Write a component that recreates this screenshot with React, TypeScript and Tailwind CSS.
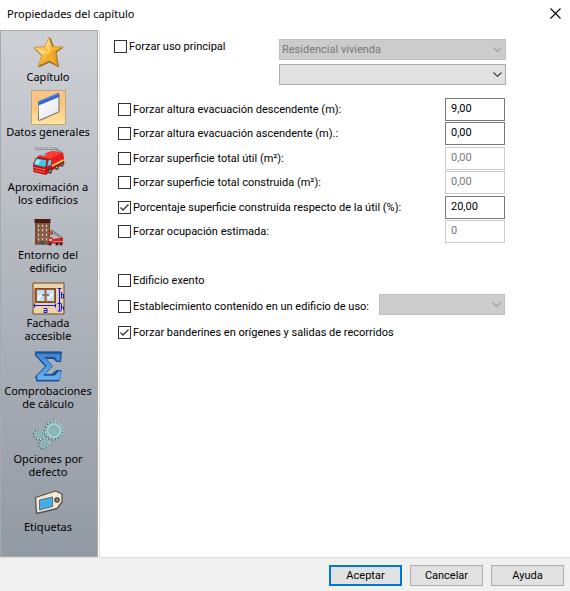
import React, { useState } from 'react';

const StarIcon = () => (
  <svg viewBox="0 0 35 35" className="h-full w-full">
    <defs>
      <linearGradient id="star" x1="0" y1="0" x2="1" y2="1">
        <stop offset="0" stopColor="#ffd468" />
        <stop offset="0.5" stopColor="#f9b93a" />
        <stop offset="1" stopColor="#e8951a" />
      </linearGradient>
    </defs>
    <path d="M19.500 2.500l3.500 9.500 9.500.5-7 5 2.500 15-9.500-5-11 5 3.500-11.500-8-7.500 11-1.500z" fill="#8a6426" />
    <path d="M18 2l3.500 9.500 10.500.5-7.500 4.500 2.500 14.500-8.500-5-11.500 5 4-10.500-8-8 11-1z" fill="url(#star)" stroke="#b57d24" strokeWidth="0.6" />
    <path d="M18 3.500l1 14-4.500-6zM4.500 13l14.500 4.500-8 2z" fill="#ffe08a" opacity="0.8" />
    <path d="M19 18l12-5.500-7 4.500 2 13z" fill="#e99b20" opacity="0.6" />
    <path d="M19 18l-11 12 10-4.500z" fill="#f0a52a" opacity="0.6" />
  </svg>
);

const WindowIcon = () => (
  <svg viewBox="0 0 35 35" className="h-full w-full">
    <defs>
      <linearGradient id="pane" x1="0" y1="0" x2="1" y2="1">
        <stop offset="0" stopColor="#ffffff" />
        <stop offset="1" stopColor="#e4e5ee" />
      </linearGradient>
    </defs>
    <path d="M7 11.500l20.500-8.500 1 1v18l-20 9-1.500-1z" fill="#6f6a68" />
    <path d="M7.500 13l20-8v16.500l-19.500 8.500z" fill="url(#pane)" />
    <path d="M7 11.500l20.500-8.500.5 4-20.500 8.500z" fill="#2f63d6" />
    <path d="M7.500 12l20-8" stroke="#6f9af0" strokeWidth="0.800" />
  </svg>
);

const TruckIcon = () => (
  <svg viewBox="0 0 35 35" className="h-full w-full">
    <path d="M3 2.500h22l8 6-2 1-7-4.500h-19z" fill="#8b8f94" />
    <path d="M5 3.500h19" stroke="#e8e8e8" strokeDasharray="1.500 1.500" />
    <path d="M2 19l5-8 14-5 11 2 1.500 11-15.500 8-3 3-12.500-3z" fill="#c90f0f" />
    <path d="M6.500 11.500l15-5.500 10 2-12 6z" fill="#ff3b30" />
    <path d="M19 14l13-5.500 1 7-14 7z" fill="#ed1c1c" />
    <path d="M5 13l11 2-1.500 7.500-12-2.500z" fill="#42c8ec" stroke="#8c1515" strokeWidth="0.7" />
    <path d="M6 14.500l4 .500-3 4.500-3.500-1z" fill="#9cecf8" />
    <path d="M17 15.500l3.500-1.500v5.500l-4.500 2.500z" fill="#5bd3ec" stroke="#8c1515" strokeWidth="0.5" />
    <path d="M9 10l4-1.500 3 1-4 1.500z" fill="#5fe0f0" />
    <path d="M21 21l11.500-6" stroke="#ffe04a" strokeWidth="1.600" />
    <path d="M3 22.500l11.500 2.500M3.500 25l10.500 2.500" stroke="#ff7d68" strokeWidth="0.9" />
    <ellipse cx="19" cy="26" rx="2" ry="2.800" fill="#3a3a3a" />
    <ellipse cx="26" cy="22.500" rx="1.800" ry="2.500" fill="#3a3a3a" />
    <ellipse cx="31" cy="19.500" rx="1.500" ry="2.300" fill="#3a3a3a" />
    <circle cx="19" cy="26" r="0.9" fill="#bbb" />
    <circle cx="26" cy="22.500" r="0.9" fill="#bbb" />
    <circle cx="31" cy="19.500" r="0.7" fill="#bbb" />
  </svg>
);

const BuildingIcon = () => (
  <svg viewBox="0 0 35 35" className="h-full w-full">
    <path d="M4 9h15v23h-15z" fill="#8e5434" />
    <path d="M3.500 6h16v4h-16z" fill="#4a1c14" />
    <path d="M5 10v22M18.500 10v22" stroke="#5e301b" strokeWidth="0.8" />
    <path d="M4 15.500h15M4 20h15M4 24.500h15" stroke="#b07a52" strokeWidth="0.6" />
    {[11.500, 16, 20.500, 25].map((y) => (
      <path
        key={y}
        d={`M6.500 ${y}h2v2.800h-2zM10.500 ${y}h2v2.800h-2zM14.500 ${y}h2v2.800h-2z`}
        fill="#c3d6de"
        stroke="#5b3320"
        strokeWidth="0.4"
      />
    ))}
    <path d="M9.500 28.500h4v3.500h-4z" fill="#3b5056" />
    <path d="M4 31.500h12" stroke="#6c6c6c" />
    <path d="M20 17.500l11 7.500" stroke="#777b80" strokeWidth="2.200" />
    <path d="M20.500 18l10 7" stroke="#ddd" strokeWidth="0.7" strokeDasharray="1 1" />
    <path d="M19.500 17v5l3-1z" fill="#d42420" />
    <path d="M17 25l4-1 1 2 10-1.500v6h-15z" fill="#cf2222" />
    <path d="M18 26h3v2h-3z" fill="#9ccbd8" />
    <path d="M22 28.500h10" stroke="#f4a08c" strokeWidth="0.8" />
    <circle cx="19" cy="31" r="1.600" fill="#292929" />
    <circle cx="26" cy="31" r="1.600" fill="#292929" />
    <circle cx="30" cy="31" r="1.600" fill="#292929" />
  </svg>
);

const FacadeIcon = () => (
  <svg viewBox="0 0 35 35" className="h-full w-full">
    <path d="M2 2h31v31h-31z" fill="#e8d5aa" stroke="#804622" />
    <path d="M4 7.500h20.500v14h-20.500z" fill="#a95a2b" stroke="#6e3517" strokeWidth="0.8" />
    <path d="M6 9h7.500v11h-7.500zM15.500 9h7.500v11h-7.500z" fill="#bfe3f5" />
    <path d="M6.500 18.500l5-6M17 18l5-6" stroke="#fff" strokeWidth="1.500" />
    <path d="M11 14h2.500M15.500 14h2.500" stroke="#222" strokeWidth="1.200" />
    <g stroke="#1414e0" fill="none">
      <path d="M3.500 24.500h21M3.500 22.500v4M24.500 22.500v4" strokeWidth="1.200" />
      <path d="M28.500 7v23M26.500 7.500h4M26.500 22.500h4M26.500 30h4" strokeWidth="1.200" />
      <path d="M30.500 11v6h2v-3.500h-2M30.500 23v6M30.500 26h2v3" />
      <path d="M12.500 27.500h3.500v4h-3v-2h3" />
    </g>
  </svg>
);

const SigmaIcon = () => (
  <svg viewBox="0 0 35 35" className="h-full w-full">
    <defs>
      <linearGradient id="sigma" x1="0" y1="0" x2="0" y2="1">
        <stop offset="0" stopColor="#3f83d6" />
        <stop offset="1" stopColor="#6db0f2" />
      </linearGradient>
    </defs>
    <path d="M4 2.500h25l2 .500-1 10h-4.500l-3-3h-7l6 7-7 8h6l5-4h5l-2.500 11.500h-22.500l-1.500-5 10-10-10-11z" fill="#174f91" />
    <path d="M5 4.500h24.500l-.5 7.500h-2.500l-3-4h-10l8 9-9 9.500h11l4.500-4.500h2.500l-2 9h-22.500v-4.500l9.500-9.500-10-10.500z" fill="url(#sigma)" stroke="#2768b3" strokeWidth="0.6" />
    <path d="M5 3.500h25" stroke="#1d5497" strokeWidth="1.500" />
  </svg>
);

const Gear = ({ cx, cy, r, teeth }: { cx: number; cy: number; r: number; teeth: number }) => (
  <g>
    <circle cx={cx - 0.8} cy={cy + 0.5} r={r} fill="none" stroke="#4b5c62" strokeWidth="2.200" strokeDasharray={`${(Math.PI * r) / teeth}`} />
    <circle cx={cx} cy={cy} r={r} fill="none" stroke="#a4d6d7" strokeWidth="2" strokeDasharray={`${(Math.PI * r) / teeth}`} />
    <circle cx={cx} cy={cy} r={r - 0.8} fill="#a4dadb" stroke="#6f979b" strokeWidth="0.5" />
    <circle cx={cx} cy={cy} r={r * 0.6} fill="#8fb4b6" stroke="#7ba6a9" strokeWidth="0.8" />
  </g>
);

const GearsIcon = () => (
  <svg viewBox="0 0 35 35" className="h-full w-full">
    <Gear cx={13.500} cy={26.500} r={4.500} teeth={10} />
    <Gear cx={9} cy={17} r={5} teeth={10} />
    <Gear cx={23} cy={13.500} r={8.500} teeth={16} />
  </svg>
);

const TagIcon = () => (
  <svg viewBox="0 0 35 35" className="h-full w-full">
    <path d="M4.500 12.500l20-6.500 6.500 3v8l-5 6.500-20.500 5z" fill="#f3e6d2" stroke="#565350" strokeWidth="1.300" strokeLinejoin="round" />
    <path d="M8.500 15l13-3v9.500l-13 3.500z" fill="#45aee9" stroke="#3a5b70" strokeWidth="0.8" />
    <circle cx="26" cy="15" r="2.200" fill="#8f8b88" stroke="#45413f" strokeWidth="1.200" />
  </svg>
);

const sections = [
  { label: 'Capítulo', icon: <StarIcon /> },
  { label: 'Datos generales', icon: <WindowIcon /> },
  { label: 'Aproximación a los edificios', icon: <TruckIcon /> },
  { label: 'Entorno del edificio', icon: <BuildingIcon /> },
  { label: 'Fachada accesible', icon: <FacadeIcon /> },
  { label: 'Comprobaciones de cálculo', icon: <SigmaIcon /> },
  { label: 'Opciones por defecto', icon: <GearsIcon /> },
  { label: 'Etiquetas', icon: <TagIcon /> },
];

// Numeric fields are grouped in pairs
const fieldGroups = [
  [
    { id: 'descendente', label: 'Forzar altura evacuación descendente (m):', value: '9,00', checked: false, disabled: false },
    { id: 'ascendente', label: 'Forzar altura evacuación ascendente (m).:', value: '0,00', checked: false, disabled: false },
  ],
  [
    { id: 'util', label: 'Forzar superficie total útil (m²):', value: '0,00', checked: false, disabled: true },
    { id: 'construida', label: 'Forzar superficie total construida (m²):', value: '0,00', checked: false, disabled: true },
  ],
  [
    { id: 'porcentaje', label: 'Porcentaje superficie construida respecto de la útil (%):', value: '20,00', checked: true, disabled: false },
    { id: 'ocupacion', label: 'Forzar ocupación estimada:', value: '0', checked: false, disabled: true },
  ],
];

const Check = ({ label, defaultChecked = false }: { label: string; defaultChecked?: boolean }) => (
  <label className="flex items-center gap-0.5 whitespace-nowrap">
    <span className="relative h-[13px] w-[13px] shrink-0">
      <input
        type="checkbox"
        defaultChecked={defaultChecked}
        className="peer block h-full w-full appearance-none border border-[#333] bg-white"
      />
      <svg viewBox="0 0 13 13" className="pointer-events-none absolute inset-0 hidden peer-checked:block">
        <path d="M2.500 6.500l2.500 2.500 5.500-5.500" fill="none" stroke="#333" strokeWidth="1.300" />
      </svg>
    </span>
    {label}
  </label>
);

const Combo = ({ name, value = '', disabled = false }: { name: string; value?: string; disabled?: boolean }) => (
  <div className="relative">
    <select
      aria-label={name}
      disabled={disabled}
      defaultValue={value}
      className="block h-[21px] w-full appearance-none border border-[#adadad] bg-[#e1e1e1] px-0.5 disabled:border-[#bfbfbf] disabled:bg-[#ccc] disabled:text-[#787878] disabled:opacity-100"
    >
      <option>{value}</option>
    </select>
    <svg
      viewBox="0 0 9 6"
      className={`pointer-events-none absolute top-2 right-1 h-1.5 w-[9px] ${disabled ? 'text-[#a0a0a0]' : 'text-[#444]'}`}
    >
      <path d="M0.500 0.500l4 4 4-4" fill="none" stroke="currentColor" strokeWidth="1.200" />
    </svg>
  </div>
);

const App: React.FC = () => {
  const [active, setActive] = useState('Datos generales');

  return (
    <div className="flex min-h-screen flex-col bg-white font-['Roboto',sans-serif] text-[11px] leading-[15px] text-black">
      <header className="flex h-[30px] items-center justify-between pr-2 pb-1 pl-[7px]">
        <h1 className="font-['Noto_Sans',sans-serif]">Propiedades del capítulo</h1>
        <button type="button" aria-label="Cerrar" className="pr-px">
          <svg viewBox="0 0 11 11" className="h-[11px] w-[11px]">
            <path d="M0.500 0.500l10 10M10.500 0.500l-10 10" stroke="#000" strokeWidth="1.100" />
          </svg>
        </button>
      </header>

      <div className="flex flex-1">
        <nav className="flex w-[98px] shrink-0 flex-col gap-[7px] border border-[#a9a9ab] bg-linear-to-b from-[#ced0d5] to-[#929aa4] pt-1 pr-0.5 font-['Noto_Sans',sans-serif]">
          {sections.map((section) => (
            <button
              key={section.label}
              type="button"
              onClick={() => setActive(section.label)}
              className="flex flex-col items-center px-0.5 leading-[13px]"
            >
              <span
                className={`h-[35px] w-[35px] ${
                  active === section.label
                    ? 'bg-linear-to-b from-[#f7c48c] via-[#fcc67c] to-[#ffeaa4] ring-1 ring-[#c3a47c] ring-inset'
                    : ''
                }`}
              >
                {section.icon}
              </span>
              {section.label}
            </button>
          ))}
        </nav>

        <main className="ml-px flex-1 border-l border-[#dcdcdc] pt-[9px] pl-3.5">
          <div className="flex items-start">
            <div className="w-[165px]">
              <Check label="Forzar uso principal" />
            </div>
            <div className="flex w-[227px] flex-col gap-1">
              <Combo name="Uso principal" value="Residencial vivienda" disabled />
              <Combo name="Uso secundario" />
            </div>
          </div>

          <div className="mt-[13px] flex flex-col gap-0.5 pl-1">
            {fieldGroups.map((group) => (
              <div key={group[0].id} className="flex flex-col gap-px">
                {group.map((field) => (
                  <div key={field.id} className="flex items-center">
                    <div className="w-[327px]">
                      <Check label={field.label} defaultChecked={field.checked} />
                    </div>
                    <input
                      type="text"
                      aria-label={field.label}
                      defaultValue={field.value}
                      disabled={field.disabled}
                      className="h-[23px] w-[60px] border border-[#7a7a7a] bg-white px-[5px] pb-0.5 disabled:border-[#ccc] disabled:text-[#787878]"
                    />
                  </div>
                ))}
              </div>
            ))}
          </div>

          <div className="mt-[30px] flex flex-col gap-1.5 pl-1">
            <Check label="Edificio exento" />
            <div className="flex items-start pb-1">
              <div className="w-[261px] pt-[5px]">
                <Check label="Establecimiento contenido en un edificio de uso:" />
              </div>
              <div className="w-[126px]">
                <Combo name="Uso del edificio" disabled />
              </div>
            </div>
            <Check label="Forzar banderines en orígenes y salidas de recorridos" defaultChecked />
          </div>
        </main>
      </div>

      <footer className="flex justify-end gap-2 border-t border-[#dcdcdc] bg-[#f0f0f0] pt-[7px] pr-1.5 pb-[5px]">
        <button type="button" className="flex h-[21px] w-[73px] items-center justify-center border-2 border-[#0078d7] bg-[#e1e1e1]">
          Aceptar
        </button>
        <button type="button" className="flex h-[21px] w-[73px] items-center justify-center border border-[#adadad] bg-[#e1e1e1]">
          Cancelar
        </button>
        <button type="button" className="flex h-[21px] w-[73px] items-center justify-center border border-[#adadad] bg-[#e1e1e1]">
          Ayuda
        </button>
      </footer>
    </div>
  );
};

export default App;
